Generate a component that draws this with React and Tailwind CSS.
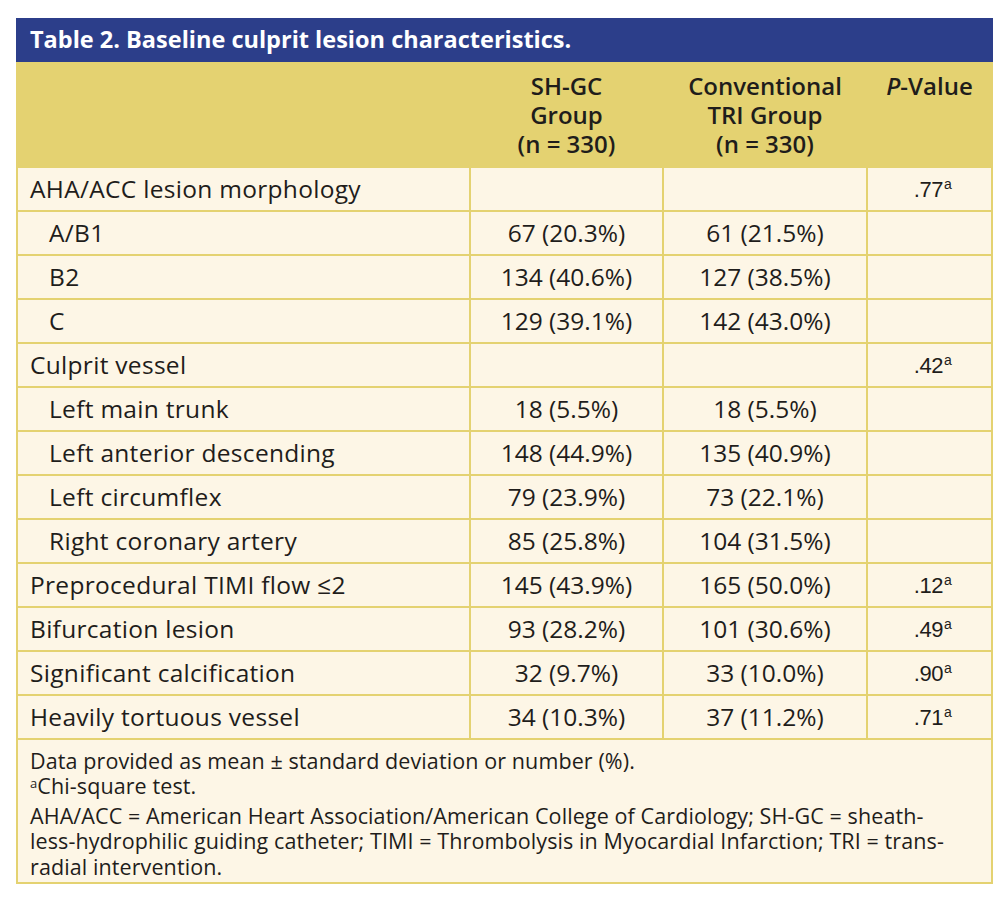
import React from "react";

const rows = [
  { label: "AHA/ACC lesion morphology", a: "", b: "", p: ".77" },
  { label: "A/B1", a: "67 (20.3%)", b: "61 (21.5%)", p: "", sub: true },
  { label: "B2", a: "134 (40.6%)", b: "127 (38.5%)", p: "", sub: true },
  { label: "C", a: "129 (39.1%)", b: "142 (43.0%)", p: "", sub: true },
  { label: "Culprit vessel", a: "", b: "", p: ".42" },
  { label: "Left main trunk", a: "18 (5.5%)", b: "18 (5.5%)", p: "", sub: true },
  { label: "Left anterior descending", a: "148 (44.9%)", b: "135 (40.9%)", p: "", sub: true },
  { label: "Left circumflex", a: "79 (23.9%)", b: "73 (22.1%)", p: "", sub: true },
  { label: "Right coronary artery", a: "85 (25.8%)", b: "104 (31.5%)", p: "", sub: true },
  { label: "Preprocedural TIMI flow ≤2", a: "145 (43.9%)", b: "165 (50.0%)", p: ".12" },
  { label: "Bifurcation lesion", a: "93 (28.2%)", b: "101 (30.6%)", p: ".49" },
  { label: "Significant calcification", a: "32 (9.7%)", b: "33 (10.0%)", p: ".90" },
  { label: "Heavily tortuous vessel", a: "34 (10.3%)", b: "37 (11.2%)", p: ".71" },
];

const cell = "bg-[#fdf6e6] h-[42px] flex items-center";

export default function App() {
  return (
    <div className="w-[1004px] h-[908px] bg-white pt-[18px] pl-[16px] font-['Open_Sans',sans-serif] text-[#1f1d1b]">
      <div className="w-[977px]">
        <div className="h-[44px] bg-[#2c3e8a] flex items-center pl-[14px] text-white font-bold text-[23.5px]">
          Table 2. Baseline culprit lesion characteristics.
        </div>
        <div className="border-x-2 border-b-2 border-[#e4d271] bg-[#e4d271]">
          <div className="grid grid-cols-[451px_191px_202px_123px] gap-[2px]">
            <div className="h-[104px] bg-[#e4d271]" />
            <div className="h-[104px] bg-[#e4d271] text-center font-semibold text-[24px] leading-[29px] pt-[9px]">
              SH-GC<br />Group<br />(n = 330)
            </div>
            <div className="h-[104px] bg-[#e4d271] text-center font-semibold text-[24px] leading-[29px] pt-[9px]">
              Conventional<br />TRI Group<br />(n = 330)
            </div>
            <div className="h-[104px] bg-[#e4d271] text-center font-semibold text-[24px] leading-[29px] pt-[9px]">
              <i>P</i>-Value
            </div>
            {rows.map((r) => (
              <React.Fragment key={r.label}>
                <div className={`${cell} text-[24.5px] tracking-[0.3px] ${r.sub ? "pl-[31px]" : "pl-[12px]"}`}>{r.label}</div>
                <div className={`${cell} justify-center text-[24.5px]`}>{r.a}</div>
                <div className={`${cell} justify-center text-[24.5px]`}>{r.b}</div>
                <div className={`${cell} justify-center text-[22px] tracking-[-0.5px] font-['Liberation_Sans',sans-serif]`}>
                  {r.p && (
                    <span className="pl-[6px]">
                      {r.p}
                      <span className="relative top-[-8px] text-[14px] ml-[1px]">a</span>
                    </span>
                  )}
                </div>
              </React.Fragment>
            ))}
            <div className="col-span-4 bg-[#fdf6e6] h-[142px] pl-[12px] pt-[8px] text-[21.5px] tracking-[0.1px] leading-[25.4px]">
              <div>Data provided as mean ± standard deviation or number (%).</div>
              <div>
                <span className="relative top-[-6px] text-[13px]">a</span>Chi-square test.
              </div>
              <div>
                AHA/ACC = American Heart Association/American College of Cardiology; SH-GC = sheath-
                <br />
                less-hydrophilic guiding catheter; TIMI = Thrombolysis in Myocardial Infarction; TRI = trans-
                <br />
                radial intervention.
              </div>
            </div>
          </div>
        </div>
      </div>
    </div>
  );
}
